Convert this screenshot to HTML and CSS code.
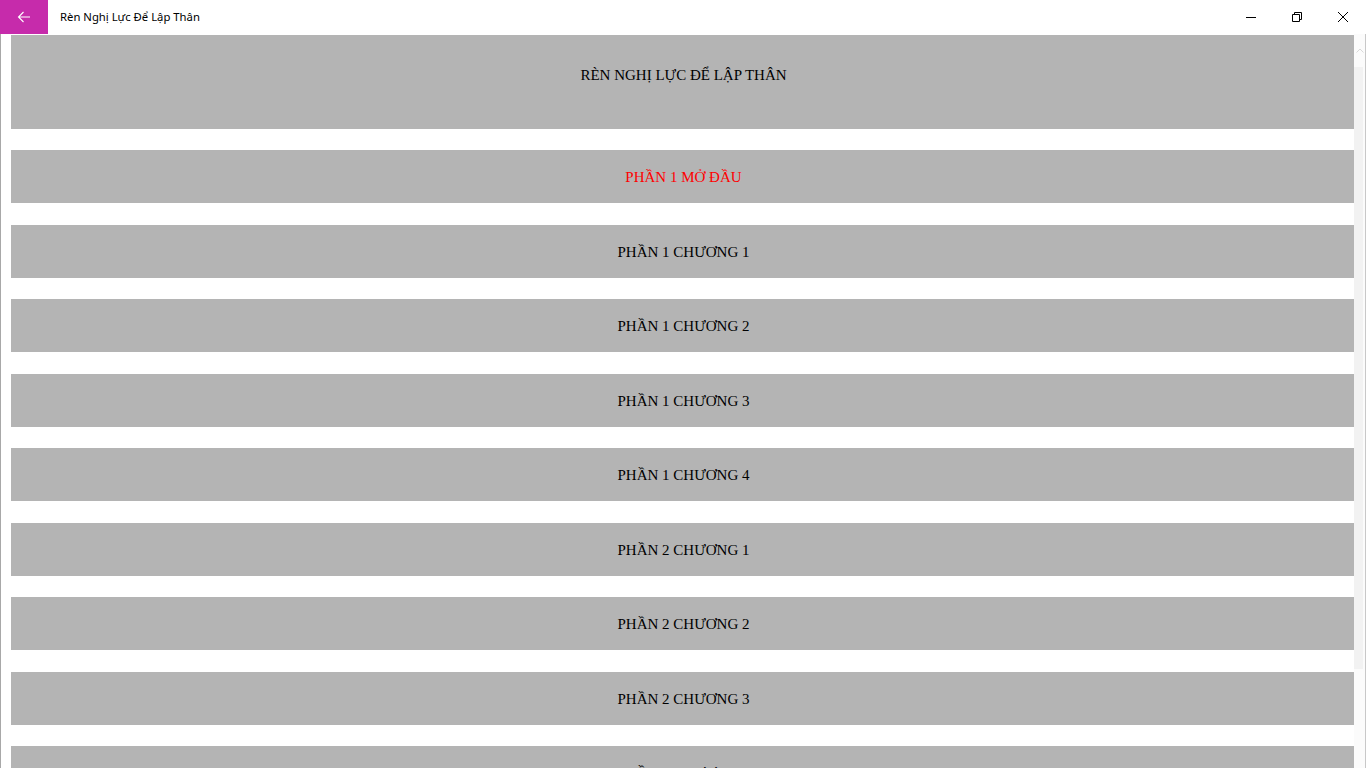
FILE: index.html
```html
<!DOCTYPE html>
<html>
<head>
<meta charset="utf-8">
<link rel="stylesheet" href="styles.css">
</head>
<body>
<div class="window">
  <header class="titlebar">
    <div class="back">
      <svg width="16" height="16" viewBox="0 0 16 16"><path d="M14 8H2.5M7.5 3L2.5 8l5 5" fill="none" stroke="#fff" stroke-width="1.1"/></svg>
    </div>
    <div class="title">Rèn Nghị Lực Để Lập Thân</div>
    <div class="controls">
      <div class="ctl"><svg width="12" height="12" viewBox="0 0 12 12"><path d="M1 6.5h10" stroke="#000" stroke-width="1"/></svg></div>
      <div class="ctl"><svg width="12" height="12" viewBox="0 0 12 12"><path d="M1.5 3.5h7v7h-7z M3.5 3.5V1.5h7v7h-2" fill="none" stroke="#000" stroke-width="1"/></svg></div>
      <div class="ctl"><svg width="12" height="12" viewBox="0 0 12 12"><path d="M1 1l10 10M11 1L1 11" stroke="#000" stroke-width="1"/></svg></div>
    </div>
  </header>
  <main class="content">
    <div class="list">
      <div class="item heading">RÈN NGHỊ LỰC ĐỂ LẬP THÂN</div>
      <div class="item active">PHẦN 1 MỞ ĐẦU</div>
      <div class="item">PHẦN 1 CHƯƠNG 1</div>
      <div class="item">PHẦN 1 CHƯƠNG 2</div>
      <div class="item">PHẦN 1 CHƯƠNG 3</div>
      <div class="item">PHẦN 1 CHƯƠNG 4</div>
      <div class="item">PHẦN 2 CHƯƠNG 1</div>
      <div class="item">PHẦN 2 CHƯƠNG 2</div>
      <div class="item">PHẦN 2 CHƯƠNG 3</div>
      <div class="item">PHẦN 2 CHƯƠNG 4</div>
    </div>
    <div class="scrollbar">
      <div class="arrow"><svg width="8" height="5" viewBox="0 0 8 5"><path d="M0.5 4.5L4 1l3.5 3.5" fill="none" stroke="#d8d8d8" stroke-width="1"/></svg></div>
      <div class="thumb"></div>
    </div>
  </main>
</div>
</body>
</html>
```
FILE: styles.css
```css
* { box-sizing: border-box; }
html, body { margin: 0; padding: 0; height: 100%; overflow: hidden; background: #fff; }
.window { width: 1366px; height: 768px; display: flex; flex-direction: column; }
.titlebar { height: 34px; flex: none; display: flex; align-items: center; background: #fff; }
.back { width: 48px; height: 34px; background: #c62bab; display: flex; align-items: center; justify-content: center; }
.title { margin-left: 12px; font-family: "Noto Sans", "Open Sans", sans-serif; font-size: 11.3px; color: #000; flex: 1; padding-bottom: 1px; }
.controls { display: flex; height: 34px; }
.ctl { width: 46px; height: 34px; display: flex; align-items: center; justify-content: center; }
.content { flex: 1; display: flex; border-left: 1px solid #a8a8a8; border-right: 1px solid #c8c8c8; min-height: 0; overflow: hidden; }
.list { flex: 1; padding: 1px 0 0 10px; display: flex; flex-direction: column; gap: 21.5px; }
.item { flex: none; height: 53px; background: #b4b4b4; display: flex; align-items: center; justify-content: center; font-family: "Liberation Serif", "Times New Roman", serif; font-size: 15px; color: #000; padding-top: 2px; }
.item.heading { height: 93.5px; align-items: flex-start; padding-top: 32px; }
.item.active { color: #f00; }
.scrollbar { width: 11px; flex: none; margin-left: -2px; background: #fbfbfb; display: flex; flex-direction: column; }
.arrow { height: 33px; display: flex; justify-content: center; padding-top: 14px; }
.thumb { height: 602px; background: #f2f2f2; margin-right: 2px; }
```
